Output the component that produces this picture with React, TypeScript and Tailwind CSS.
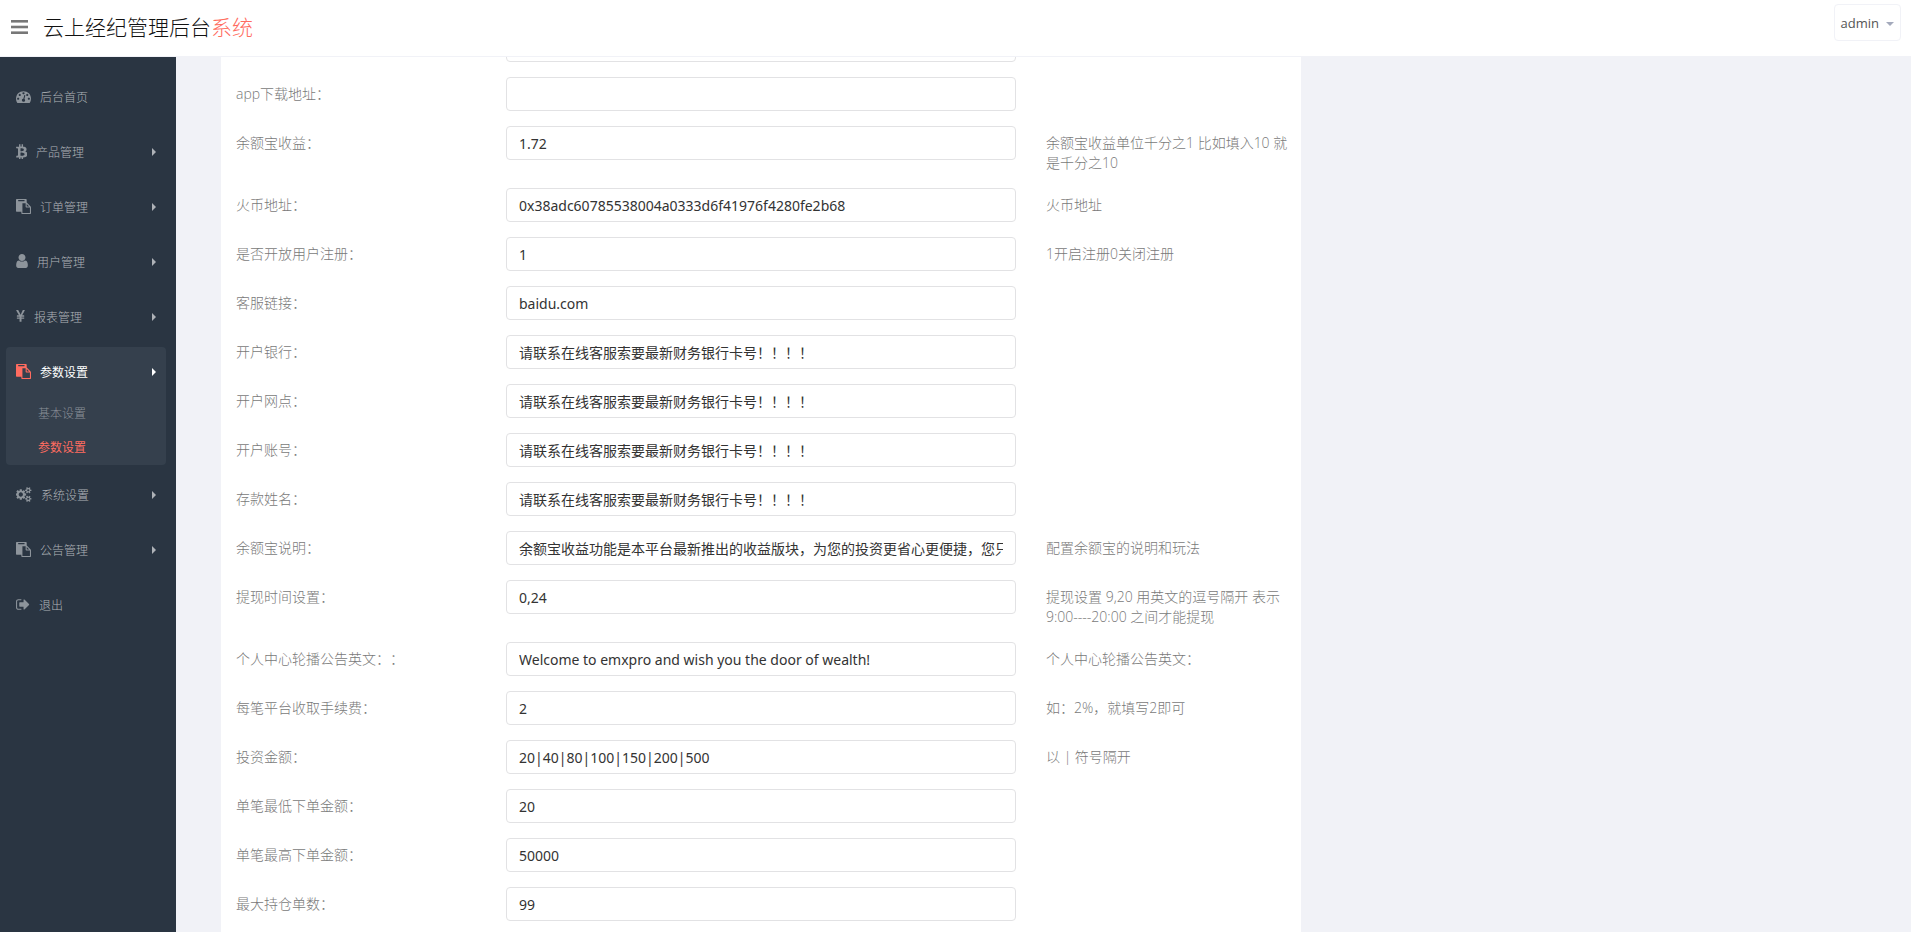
import React from "react";

type Glyph = { box: string; size: string; d: string };

const glyphs: Record<string, Glyph> = {
  gauge: {
    box: "0 0 1792 1792",
    size: "w-[15px] h-[15px]",
    d: "M384 1152q0-53-37.5-90.5t-90.500-37.5-90.500 37.5-37.500 90.500 37.500 90.500 90.500 37.500 90.500-37.500 37.500-90.500zm192-448q0-53-37.500-90.500t-90.500-37.500-90.500 37.500-37.500 90.500 37.500 90.500 90.500 37.500 90.500-37.500 37.500-90.500zm428 481l101-382q6-26-7.500-48.500t-38.500-29.500-48 6.500-30 39.500l-101 382q-60 5-107 43.500t-63 98.500q-20 77 20 146t117 89 146-20 89-117q16-60-6-117t-72-91zm660-33q0-53-37.500-90.500t-90.500-37.500-90.500 37.500-37.500 90.500 37.500 90.500 90.500 37.500 90.500-37.500 37.500-90.500zm-640-640q0-53-37.500-90.500t-90.500-37.500-90.500 37.500-37.500 90.500 37.500 90.500 90.500 37.500 90.500-37.500 37.500-90.500zm448 192q0-53-37.500-90.500t-90.500-37.500-90.500 37.500-37.500 90.500 37.500 90.500 90.500 37.500 90.500-37.500 37.500-90.500zm320 448q0 261-141 483-19 29-54 29h-1402q-35 0-54-29-141-221-141-483 0-182 71-348t191-286 286-191 348-71 348 71 286 191 191 286 71 348z",
  },
  bitcoin: {
    box: "300 96 1173 1600",
    size: "w-[11px] h-[15px]",
    d: "M1423.500 640q18 182-131 258 117 28 175 103t45 214q-7 71-32.500 125t-64.500 89-97 58.500-121.500 34.500-145.500 15v255h-154v-251q-80 0-122-1v252h-154v-255q-18 0-54-.5t-55-.5h-200l31-183h111q50 0 58-51v-402h16q-6-1-16-1v-287q-13-68-89-68h-111v-164l212 1q64 0 97-1v-252h154v247q82-2 122-2v-245h154v252q79 7 140 22.500t113 45 82.500 78 36.500 114.500zm-215 545q0-36-15-64t-37-46-57.500-30.500-65.500-18.500-74-9-69-3-64.500 1-47.500 1v338q8 0 37 .5t48 .5 53-1.500 58.500-4 57-8.500 55.500-14 47.500-21 39.500-30 24.500-40 9.500-51zm-71-476q0-33-12.500-58.500t-30.500-42-48-28-55-16.500-61.500-8-58-2.500-54 1-39.500.5v307q5 0 34.500.5t46.500 0 50-2 55-5.500 51.500-11 48.500-18.500 37-27 27-38.500 9-51z",
  },
  paste: {
    box: "0 0 1792 1792",
    size: "w-[15px] h-[15px]",
    d: "M768 1664h896v-640h-416q-40 0-68-28t-28-68v-416h-384v1152zm256-1440v-64q0-13-9.5-22.5t-22.5-9.5h-704q-13 0-22.5 9.5t-9.5 22.5v64q0 13 9.5 22.5t22.5 9.5h704q13 0 22.5-9.5t9.5-22.5zm256 672h299l-299-299v299zm512 128v672q0 40-28 68t-68 28h-960q-40 0-68-28t-28-68v-160h-544q-40 0-68-28t-28-68v-1344q0-40 28-68t68-28h1088q40 0 68 28t28 68v328q21 13 36 28l408 408q28 28 48 76t20 88z",
  },
  user: {
    box: "256 128 1280 1536",
    size: "w-[12px] h-[14px]",
    d: "M1536 1399q0 109-62.5 187t-150.5 78h-854q-88 0-150.5-78t-62.5-187q0-85 8.5-160.5t31.5-152 58.5-131 94-89 134.5-34.5q131 128 313 128t313-128q76 0 134.5 34.5t94 89 58.5 131 31.5 152 8.5 160.5zm-256-887q0 159-112.5 271.5t-271.5 112.5-271.5-112.5-112.5-271.5 112.5-271.5 271.5-112.5 271.5 112.5 112.5 271.5z",
  },
  yen: {
    box: "382 0 1027 1792",
    size: "w-[9px] h-[15px]",
    d: "M985.5 1536h-172q-13 0-22.5-9t-9.5-23v-330h-288q-13 0-22.5-9t-9.5-23v-103q0-13 9.500-22.500t22.500-9.500h288v-85h-288q-13 0-22.500-9t-9.500-23v-104q0-13 9.500-22.500t22.500-9.500h214l-321-578q-8-16 0-32 10-16 28-16h194q19 0 29 18l215 425q19 38 56 125 10-24 30.500-68t27.500-61l191-420q8-19 29-19h191q17 0 27 16 9 14 1 31l-313 579h215q13 0 22.500 9.500t9.500 22.500v104q0 14-9.500 23t-22.500 9h-290v85h290q13 0 22.500 9.500t9.500 22.500v103q0 14-9.500 23t-22.500 9h-290v330q0 13-9.500 22.500t-22.500 9.500z",
  },
  cogs: {
    box: "0 0 1920 1792",
    size: "w-[16px] h-[15px]",
    d: "M832 896q0-106-75-181t-181-75-181 75-75 181 75 181 181 75 181-75 75-181zm768 512q0-52-38-90t-90-38-90 38-38 90q0 53 37.500 90.500t90.500 37.500 90.500-37.500 37.500-90.500zm0-1024q0-52-38-90t-90-38-90 38-38 90q0 53 37.500 90.500t90.500 37.500 90.500-37.500 37.500-90.500zm-384 421v185q0 10-7 19.500t-16 10.500l-155 24q-11 35-32 76 34 48 90 115 7 11 7 20 0 12-7 19-23 30-82.500 89.500t-78.500 59.500q-11 0-21-7l-115-90q-37 19-77 31-11 108-23 155-7 24-30 24h-186q-11 0-20-7.500t-10-17.500l-23-153q-34-10-75-31l-118 89q-7 7-20 7-11 0-21-8-144-133-144-160 0-9 7-19 10-14 41-53t47-61q-23-44-35-82l-152-24q-10-1-17-9.500t-7-19.500v-185q0-10 7-19.500t16-10.500l155-24q11-35 32-76-34-48-90-115-7-11-7-20 0-12 7-20 22-30 82-89t79-59q11 0 21 7l115 90q34-18 77-32 11-108 23-154 7-24 30-24h186q11 0 20 7.500t10 17.500l23 153q34 10 75 31l118-89q8-7 20-7 11 0 21 8 144 133 144 160 0 8-7 19-12 16-42 54t-45 60q23 48 34 82l152 23q10 2 17 10.500t7 19.500zm640 533v140q0 16-149 31-12 27-30 52 51 113 51 138 0 4-4 7-122 71-124 71-8 0-46-47t-52-68q-20 2-30 2t-30-2q-14 21-52 68t-46 47q-2 0-124-71-4-3-4-7 0-25 51-138-18-25-30-52-149-15-149-31v-140q0-16 149-31 13-29 30-52-51-113-51-138 0-4 4-7 4-2 35-20t59-34 30-16q8 0 46 46.500t52 67.500q20-2 30-2t30 2q51-71 92-112l6-2q4 0 124 70 4 3 4 7 0 25-51 138 17 23 30 52 149 15 149 31zm0-1024v140q0 16-149 31-12 27-30 52 51 113 51 138 0 4-4 7-122 71-124 71-8 0-46-47t-52-68q-20 2-30 2t-30-2q-14 21-52 68t-46 47q-2 0-124-71-4-3-4-7 0-25 51-138-18-25-30-52-149-15-149-31v-140q0-16 149-31 13-29 30-52-51-113-51-138 0-4 4-7 4-2 35-20t59-34 30-16q8 0 46 46.500t52 67.500q20-2 30-2t30 2q51-71 92-112l6-2q4 0 124 70 4 3 4 7 0 25-51 138 17 23 30 52 149 15 149 31z",
  },
  exit: {
    box: "64 0 1664 1792",
    size: "w-[14px] h-[15px]",
    d: "M704 1440q0 4 1 20t.5 26.5-3 23.5-10 19.5-20.5 6.5h-320q-119 0-203.5-84.5t-84.5-203.5v-704q0-119 84.5-203.5t203.5-84.5h320q13 0 22.5 9.5t9.5 22.5q0 4 1 20t.5 26.5-3 23.5-10 19.5-20.5 6.5h-320q-66 0-113 47t-47 113v704q0 66 47 113t113 47h312l11.500 1 11.500 3 8 5.500 7 9 2 13.500zm928-544q0 26-19 45l-544 544q-19 19-45 19t-45-19-19-45v-288h-448q-26 0-45-19t-19-45v-384q0-26 19-45t45-19h448v-288q0-26 19-45t45-19 45 19l544 544q19 19 19 45z",
  },
};

type MenuItem = {
  icon: keyof typeof glyphs;
  label: string;
  arrow?: boolean;
  children?: { label: string; active?: boolean }[];
};

const menu: MenuItem[] = [
  { icon: "gauge", label: "后台首页" },
  { icon: "bitcoin", label: "产品管理", arrow: true },
  { icon: "paste", label: "订单管理", arrow: true },
  { icon: "user", label: "用户管理", arrow: true },
  { icon: "yen", label: "报表管理", arrow: true },
  {
    icon: "paste",
    label: "参数设置",
    arrow: true,
    children: [{ label: "基本设置" }, { label: "参数设置", active: true }],
  },
  { icon: "cogs", label: "系统设置", arrow: true },
  { icon: "paste", label: "公告管理", arrow: true },
  { icon: "exit", label: "退出" },
];

type Field = { label: string; value: string; hint?: string };

const notice = "请联系在线客服索要最新财务银行卡号！！！！";

const fields: Field[] = [
  { label: "", value: "" },
  { label: "app下载地址：", value: "" },
  { label: "余额宝收益：", value: "1.72", hint: "余额宝收益单位千分之1 比如填入10 就是千分之10" },
  { label: "火币地址：", value: "0x38adc60785538004a0333d6f41976f4280fe2b68", hint: "火币地址" },
  { label: "是否开放用户注册：", value: "1", hint: "1开启注册0关闭注册" },
  { label: "客服链接：", value: "baidu.com" },
  { label: "开户银行：", value: notice },
  { label: "开户网点：", value: notice },
  { label: "开户账号：", value: notice },
  { label: "存款姓名：", value: notice },
  {
    label: "余额宝说明：",
    value: "余额宝收益功能是本平台最新推出的收益版块，为您的投资更省心更便捷，您只",
    hint: "配置余额宝的说明和玩法",
  },
  { label: "提现时间设置：", value: "0,24", hint: "提现设置 9,20 用英文的逗号隔开 表示 9:00----20:00 之间才能提现" },
  {
    label: "个人中心轮播公告英文：：",
    value: "Welcome to emxpro and wish you the door of wealth!",
    hint: "个人中心轮播公告英文：",
  },
  { label: "每笔平台收取手续费：", value: "2", hint: "如：2%，就填写2即可" },
  { label: "投资金额：", value: "20|40|80|100|150|200|500", hint: "以 | 符号隔开" },
  { label: "单笔最低下单金额：", value: "20" },
  { label: "单笔最高下单金额：", value: "50000" },
  { label: "最大持仓单数：", value: "99" },
];

function Icon({ name, className }: { name: keyof typeof glyphs; className: string }) {
  const g = glyphs[name];
  return (
    <svg viewBox={g.box} className={`${g.size} mb-0.5 shrink-0 ${className}`} fill="currentColor" aria-hidden="true">
      <path d={g.d} />
    </svg>
  );
}

function Header() {
  return (
    <header className="flex h-[57px] shrink-0 items-start justify-between border-b border-[#f1f2f7] bg-white pr-2.5 pl-[11px]">
      <div className="flex h-[53px] items-center gap-[15px]">
        <button type="button" aria-label="菜单" className="text-[#777777]">
          <svg viewBox="0 0 17 14" className="h-[14px] w-[17px]" fill="currentColor" aria-hidden="true">
            <rect width="17" height="2.600" />
            <rect y="5.700" width="17" height="2.600" />
            <rect y="11.400" width="17" height="2.600" />
          </svg>
        </button>
        <a href="#home" className="text-[21px] leading-[30px] font-light text-[#111111]">
          云上经纪管理后台<span className="text-[#ff6c60]">系统</span>
        </a>
      </div>
      <button
        type="button"
        className="mt-1 flex h-[37px] items-center gap-[7px] rounded border border-[#f1f2f7] px-1.5 pt-0.5 text-[13px] text-[#555555]"
      >
        admin
        <svg viewBox="0 0 8 4" className="h-1 w-2 text-[#a4aabc]" fill="currentColor" aria-hidden="true">
          <path d="M0 0h8L4 4z" />
        </svg>
      </button>
    </header>
  );
}

function Sidebar() {
  return (
    <nav className="w-44 shrink-0 bg-[#2a3542] pt-[15px] pr-2.5 pl-1.5 text-xs font-light text-[#aeb2b7]">
      <ul className="flex flex-col gap-[5px]">
        {menu.map((item) => {
          const open = Boolean(item.children);
          return (
            <li key={item.label} className={open ? "rounded bg-[#35404d]" : ""}>
              <a
                href="#menu"
                className={`flex h-[50px] items-center px-2.5 ${open ? "font-normal text-white" : ""}`}
              >
                <Icon name={item.icon} className={open ? "text-[#ff6c60]" : "text-[#8d949b]"} />
                <span className="ml-[9px] flex-1 pt-0.5">{item.label}</span>
                {item.arrow && (
                  <svg viewBox="0 0 4 8" className="h-2 w-1" fill="currentColor" aria-hidden="true">
                    <path d="M0 0v8l4-4z" />
                  </svg>
                )}
              </a>
              {item.children && (
                <ul>
                  {item.children.map((c) => (
                    <li key={c.label}>
                      <a
                        href="#menu"
                        className={`flex h-[34px] items-center pl-8 ${
                          c.active ? "font-normal text-[#ff6c60]" : "text-[#8b9199]"
                        }`}
                      >
                        {c.label}
                      </a>
                    </li>
                  ))}
                </ul>
              )}
            </li>
          );
        })}
      </ul>
    </nav>
  );
}

function FieldRow({ field, id }: { field: Field; id: string }) {
  return (
    <div className="mb-[15px] flex items-start">
      <label htmlFor={id} className="w-1/4 px-[15px] pt-[7px] font-light">
        {field.label}
      </label>
      <div className="w-1/2 px-[15px]">
        <input
          id={id}
          type="text"
          defaultValue={field.value}
          className="block h-[34px] w-full rounded border border-[#e2e2e4] bg-white px-3 font-['Noto_Sans','Noto_Sans_CJK_SC',sans-serif] text-sm text-[#333333]"
        />
      </div>
      <p className="w-1/4 pt-[7px] pr-2 pl-[15px] font-light">{field.hint}</p>
    </div>
  );
}

export default function App() {
  return (
    <div className="flex h-screen flex-col overflow-hidden bg-[#f1f2f7] font-['Open_Sans','Noto_Sans_CJK_SC',sans-serif]">
      <Header />
      <div className="flex min-h-0 flex-1">
        <Sidebar />
        <main className="min-w-0 flex-1 overflow-hidden pl-[45px]">
          <form className="-mt-[29px] w-full max-w-[1080px] bg-white pb-8 text-sm text-[#797979] [text-spacing-trim:space-all]">
            {fields.map((f, i) => (
              <FieldRow key={i} id={`field-${i}`} field={f} />
            ))}
          </form>
        </main>
      </div>
    </div>
  );
}
